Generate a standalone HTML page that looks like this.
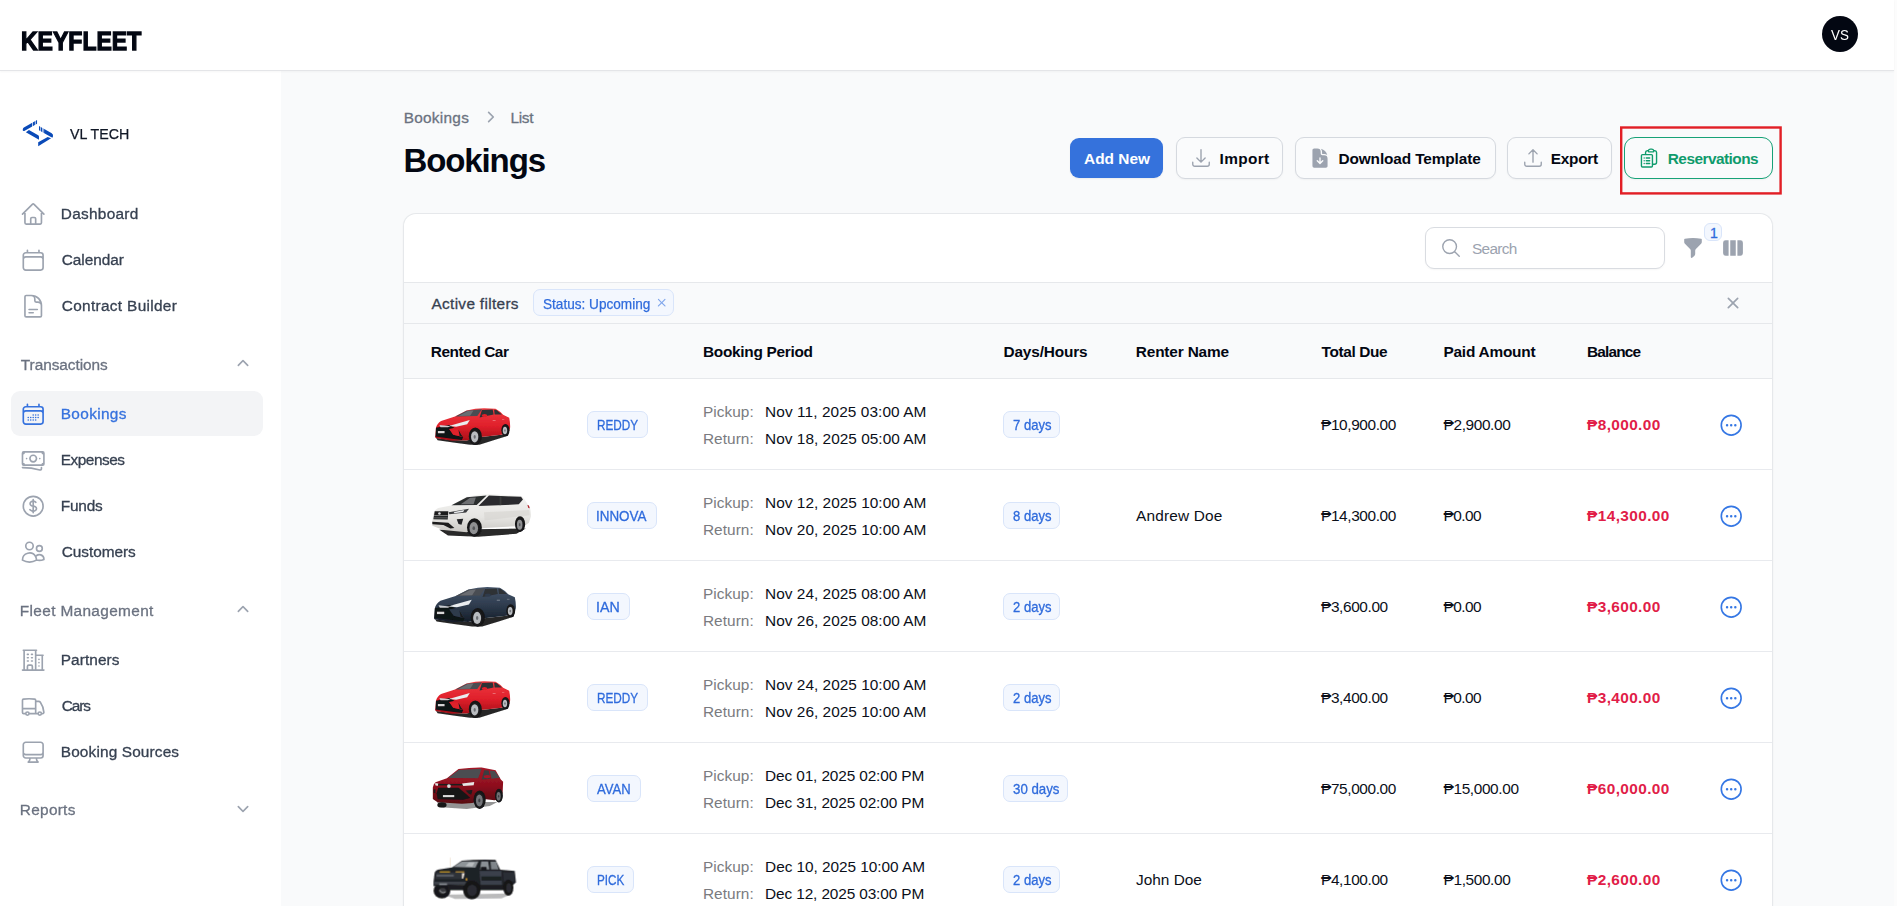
<!DOCTYPE html>
<html lang="en">
<head>
<meta charset="utf-8">
<title>Bookings - KEYFLEET</title>
<style>
*{box-sizing:border-box;margin:0;padding:0}
html,body{width:1897px;height:906px;overflow:hidden;background:#f9fafb;font-family:"Liberation Sans",sans-serif;color:#030712}
body{position:relative}
.abs{position:absolute}
.t{position:absolute;white-space:nowrap;line-height:1}
/* header */
#hdr{position:absolute;left:0;top:0;width:1894px;height:71px;background:#fff;border-bottom:1px solid #e4e5e8;box-shadow:0 1px 2px rgba(0,0,0,.04);z-index:3}
#gutter{position:absolute;left:1894px;top:0;width:3px;height:906px;background:#fcfcfc}
#brand{left:20px;top:27px;font-size:27px;font-weight:700;letter-spacing:-0.6px;color:#030712;-webkit-text-stroke:1.1px #030712}
#avatar{position:absolute;left:1822px;top:16px;width:36px;height:36px;border-radius:50%;background:#030712;color:#fff;font-size:14px;text-align:center;line-height:36px}
/* sidebar */
#side{position:absolute;left:0;top:71px;width:281px;height:835px;background:#fff}
.nav{position:absolute;left:60px;font-size:15px;font-weight:400;color:#374151;white-space:nowrap;line-height:1;-webkit-text-stroke:.35px #374151}
.grp{position:absolute;left:20px;font-size:15px;color:#6b7280;white-space:nowrap;line-height:1;-webkit-text-stroke:.3px #6b7280}
.ico{position:absolute;left:21px;width:24px;height:24px;fill:none;stroke:#9ca3af;stroke-width:1.5;stroke-linecap:round;stroke-linejoin:round}
.chev{position:absolute;left:235px;width:16px;height:16px;fill:none;stroke:#9ca3af;stroke-width:1.6;stroke-linecap:round;stroke-linejoin:round}
#gl{position:absolute;left:0;top:0;width:1894px;height:906px;will-change:transform;pointer-events:none;z-index:5}
#active{position:absolute;left:11px;top:391px;width:252px;height:45px;border-radius:8px;background:#f3f4f6}
</style>
</head>
<body>
<!-- HEADER -->
<div id="hdr">
  <div id="avatar"></div>
</div>
<div id="gutter"></div>

<!-- SIDEBAR -->
<div id="side"></div>
<div id="gl"><div class="t" style="left:21.30px;top:27.75px;font-size:26.4px;color:#030712;font-weight:700;-webkit-text-stroke:1.35px #030712;transform:scaleX(0.8723);transform-origin:0 0;">KEYFLEET</div>
<div class="t" style="left:1831.40px;top:26.96px;font-size:15.4px;color:#ffffff;transform:scaleX(0.8685);transform-origin:0 0;">VS</div>
<svg class="abs" style="left:10px;top:100px" width="100" height="70" viewBox="0 0 1294 906">
<g fill="#0a4ab8">
<path d="M185 352 L350 258 L350 308 L185 402 Q160 405 165 378 Q168 358 185 352Z"/>
<path d="M205 418 L245 388 L365 455 Q378 465 375 480 L375 514Z"/>
<path d="M375 338 L540 430 Q565 448 555 478 Q548 492 530 480 L375 392Z"/>
<path d="M365 548 L488 478 L532 496 L365 598Z"/>
</g>
<g fill="#fff">
<rect x="286" y="250" width="9" height="110"/><rect x="322" y="240" width="9" height="100"/>
<rect x="392" y="330" width="8" height="90"/><rect x="414" y="345" width="8" height="90"/><rect x="434" y="360" width="7" height="90"/>
</g></svg>
<div class="t" style="left:70.12px;top:125.56px;font-size:15.4px;color:#111827;-webkit-text-stroke:0.25px #111827;transform:scaleX(0.9244);transform-origin:0 0;">VL TECH</div>
<div class="abs" style="left:11px;top:391px;width:252px;height:45px;border-radius:9px;background:#f3f4f6"></div>
<svg class="abs" style="left:20.4px;top:201.2px" width="26.4" height="26.4" viewBox="0 0 24 24" fill="none" stroke="#9ca3af" stroke-width="1.5" stroke-linecap="round" stroke-linejoin="round"><path d="m2.25 12 8.954-8.955c.44-.439 1.152-.439 1.591 0L21.75 12M4.5 9.75v10.125c0 .621.504 1.125 1.125 1.125H9.75v-4.875c0-.621.504-1.125 1.125-1.125h2.25c.621 0 1.125.504 1.125 1.125V21h4.125c.621 0 1.125-.504 1.125-1.125V9.75M8.25 21h8.25"/></svg>
<div class="t" style="left:60.75px;top:206.26px;font-size:15.4px;color:#374151;letter-spacing:0.283px;-webkit-text-stroke:0.3px #374151;">Dashboard</div>
<svg class="abs" style="left:20.4px;top:247.2px" width="26.4" height="26.4" viewBox="0 0 24 24" fill="none" stroke="#9ca3af" stroke-width="1.5" stroke-linecap="round" stroke-linejoin="round"><path d="M6.75 3v2.25M17.25 3v2.25M3 18.75V7.5a2.25 2.25 0 0 1 2.25-2.25h13.5A2.25 2.25 0 0 1 21 7.5v11.25m-18 0A2.25 2.25 0 0 0 5.25 21h13.5A2.25 2.25 0 0 0 21 18.75m-18 0v-7.5A2.25 2.25 0 0 1 5.25 9h13.5A2.25 2.25 0 0 1 21 11.25v7.5"/></svg>
<div class="t" style="left:61.75px;top:252.26px;font-size:15.4px;color:#374151;letter-spacing:-0.047px;-webkit-text-stroke:0.3px #374151;">Calendar</div>
<svg class="abs" style="left:20.4px;top:293.2px" width="26.4" height="26.4" viewBox="0 0 24 24" fill="none" stroke="#9ca3af" stroke-width="1.5" stroke-linecap="round" stroke-linejoin="round"><path d="M19.5 14.25v-2.625a3.375 3.375 0 0 0-3.375-3.375h-1.5A1.125 1.125 0 0 1 13.5 7.125v-1.5a3.375 3.375 0 0 0-3.375-3.375H8.25m0 12.75h7.5m-7.5 3H12M10.5 2.25H5.625c-.621 0-1.125.504-1.125 1.125v17.25c0 .621.504 1.125 1.125 1.125h12.75c.621 0 1.125-.504 1.125-1.125V11.25a9 9 0 0 0-9-9Z"/></svg>
<div class="t" style="left:61.75px;top:298.26px;font-size:15.4px;color:#374151;letter-spacing:0.318px;-webkit-text-stroke:0.3px #374151;">Contract Builder</div>
<svg class="abs" style="left:20.4px;top:400.5px" width="26.4" height="26.4" viewBox="0 0 24 24" fill="none" stroke="#3672de" stroke-width="1.5" stroke-linecap="round" stroke-linejoin="round"><path d="M6.75 3v2.25M17.25 3v2.25M3 18.75V7.5a2.25 2.25 0 0 1 2.25-2.25h13.5A2.25 2.25 0 0 1 21 7.5v11.25m-18 0A2.25 2.25 0 0 0 5.25 21h13.5A2.25 2.25 0 0 0 21 18.75m-18 0v-7.5A2.25 2.25 0 0 1 5.25 9h13.5A2.25 2.25 0 0 1 21 11.25v7.5m-9-6h.008v.008H12v-.008ZM12 15h.008v.008H12V15Zm0 2.25h.008v.008H12v-.008ZM9.75 15h.008v.008H9.75V15Zm0 2.25h.008v.008H9.75v-.008ZM7.5 15h.008v.008H7.5V15Zm0 2.25h.008v.008H7.5v-.008Zm6.75-4.5h.008v.008h-.008v-.008Zm0 2.25h.008v.008h-.008V15Zm0 2.25h.008v.008h-.008v-.008Zm2.25-4.5h.008v.008H16.5v-.008Zm0 2.25h.008v.008H16.5V15Z"/></svg>
<div class="t" style="left:60.75px;top:405.56px;font-size:15.4px;color:#3672de;letter-spacing:0.340px;-webkit-text-stroke:0.3px #3672de;">Bookings</div>
<svg class="abs" style="left:20.4px;top:446.5px" width="26.4" height="26.4" viewBox="0 0 24 24" fill="none" stroke="#9ca3af" stroke-width="1.5" stroke-linecap="round" stroke-linejoin="round"><path d="M2.25 18.75a60.07 60.07 0 0 1 15.797 2.101c.727.198 1.453-.342 1.453-1.096V18.75M3.75 4.5v.75A.75.75 0 0 1 3 6h-.75m0 0v-.375c0-.621.504-1.125 1.125-1.125H20.25M2.25 6v9m18-10.5v.75c0 .414.336.75.75.75h.75m-1.5-1.5h.375c.621 0 1.125.504 1.125 1.125v9.75c0 .621-.504 1.125-1.125 1.125h-.375m1.5-1.5H21a.75.75 0 0 0-.75.75v.75m0 0H3.75m0 0h-.375a1.125 1.125 0 0 1-1.125-1.125V15m1.5 1.5v-.75A.75.75 0 0 0 3 15h-.75M15 10.5a3 3 0 1 1-6 0 3 3 0 0 1 6 0Zm3 0h.008v.008H18V10.5Zm-12 0h.008v.008H6V10.5Z"/></svg>
<div class="t" style="left:60.75px;top:451.56px;font-size:15.4px;color:#374151;letter-spacing:-0.471px;-webkit-text-stroke:0.3px #374151;">Expenses</div>
<svg class="abs" style="left:20.4px;top:492.5px" width="26.4" height="26.4" viewBox="0 0 24 24" fill="none" stroke="#9ca3af" stroke-width="1.5" stroke-linecap="round" stroke-linejoin="round"><path d="M12 6v12m-3-2.818.879.659c1.171.879 3.07.879 4.242 0 1.172-.879 1.172-2.303 0-3.182C13.536 12.219 12.768 12 12 12c-.725 0-1.45-.22-2.003-.659-1.106-.879-1.106-2.303 0-3.182s2.9-.879 4.006 0l.415.33M21 12a9 9 0 1 1-18 0 9 9 0 0 1 18 0Z"/></svg>
<div class="t" style="left:60.75px;top:497.56px;font-size:15.4px;color:#374151;letter-spacing:-0.195px;-webkit-text-stroke:0.3px #374151;">Funds</div>
<svg class="abs" style="left:20.4px;top:538.5px" width="26.4" height="26.4" viewBox="0 0 24 24" fill="none" stroke="#9ca3af" stroke-width="1.5" stroke-linecap="round" stroke-linejoin="round"><path d="M15 19.128a9.38 9.38 0 0 0 2.625.372 9.337 9.337 0 0 0 4.121-.952 4.125 4.125 0 0 0-7.533-2.493M15 19.128v-.003c0-1.113-.285-2.16-.786-3.07M15 19.128v.106A12.318 12.318 0 0 1 8.624 21c-2.331 0-4.512-.645-6.374-1.766l-.001-.109a6.375 6.375 0 0 1 11.964-3.07M12 6.375a3.375 3.375 0 1 1-6.75 0 3.375 3.375 0 0 1 6.75 0Zm8.25 2.25a2.625 2.625 0 1 1-5.25 0 2.625 2.625 0 0 1 5.25 0Z"/></svg>
<div class="t" style="left:61.75px;top:543.56px;font-size:15.4px;color:#374151;letter-spacing:-0.051px;-webkit-text-stroke:0.3px #374151;">Customers</div>
<svg class="abs" style="left:20.4px;top:646.5px" width="26.4" height="26.4" viewBox="0 0 24 24" fill="none" stroke="#9ca3af" stroke-width="1.5" stroke-linecap="round" stroke-linejoin="round"><path d="M2.25 21h19.5m-18-18v18m10.5-18v18m6-13.5V21M6.75 6.75h.75m-.75 3h.75m-.75 3h.75m3-6h.75m-.75 3h.75m-.75 3h.75M6.75 21v-3.375c0-.621.504-1.125 1.125-1.125h2.25c.621 0 1.125.504 1.125 1.125V21M3 3h12m-.75 4.5H21m-3.75 3.75h.008v.008h-.008v-.008Zm0 3h.008v.008h-.008v-.008Zm0 3h.008v.008h-.008v-.008Z"/></svg>
<div class="t" style="left:60.75px;top:651.56px;font-size:15.4px;color:#374151;letter-spacing:0.076px;-webkit-text-stroke:0.3px #374151;">Partners</div>
<svg class="abs" style="left:20.4px;top:692.5px" width="26.4" height="26.4" viewBox="0 0 24 24" fill="none" stroke="#9ca3af" stroke-width="1.5" stroke-linecap="round" stroke-linejoin="round"><path d="M8.25 18.75a1.5 1.5 0 0 1-3 0m3 0a1.5 1.5 0 0 0-3 0m3 0h6m-9 0H3.375a1.125 1.125 0 0 1-1.125-1.125V14.25m17.25 4.5a1.5 1.5 0 0 1-3 0m3 0a1.5 1.5 0 0 0-3 0m3 0h1.125c.621 0 1.129-.504 1.09-1.124a17.902 17.902 0 0 0-3.213-9.193 2.056 2.056 0 0 0-1.58-.86H14.25M16.5 18.75h-2.25m0-11.177v-.958c0-.568-.422-1.048-.987-1.106a48.554 48.554 0 0 0-10.026 0 1.106 1.106 0 0 0-.987 1.106v7.635m12-6.677v6.677m0 4.5v-4.5m0 0h-12"/></svg>
<div class="t" style="left:61.75px;top:697.56px;font-size:15.4px;color:#374151;letter-spacing:-1.133px;-webkit-text-stroke:0.3px #374151;">Cars</div>
<svg class="abs" style="left:20.4px;top:738.5px" width="26.4" height="26.4" viewBox="0 0 24 24" fill="none" stroke="#9ca3af" stroke-width="1.5" stroke-linecap="round" stroke-linejoin="round"><path d="M9 17.25v1.007a3 3 0 0 1-.879 2.122L7.5 21h9l-.621-.621A3 3 0 0 1 15 18.257V17.25m6-12V15a2.25 2.25 0 0 1-2.25 2.25H5.25A2.25 2.25 0 0 1 3 15V5.25m18 0A2.25 2.25 0 0 0 18.75 3H5.25A2.25 2.25 0 0 0 3 5.25m18 0V12a2.25 2.25 0 0 1-2.25 2.25H5.25A2.25 2.25 0 0 1 3 12V5.25"/></svg>
<div class="t" style="left:60.75px;top:743.56px;font-size:15.4px;color:#374151;letter-spacing:0.139px;-webkit-text-stroke:0.3px #374151;">Booking Sources</div>
<div class="t" style="left:20.85px;top:356.66px;font-size:15.4px;color:#6b7280;letter-spacing:-0.058px;-webkit-text-stroke:0.3px #6b7280;">Transactions</div>
<svg class="abs" style="left:232px;top:353.0px" width="22" height="22" viewBox="0 0 20 20" fill="#9ca3af"><path fill-rule="evenodd" clip-rule="evenodd" d="M9.47 6.47a.75.75 0 0 1 1.06 0l4.25 4.25a.75.75 0 1 1-1.06 1.06L10 8.06l-3.72 3.72a.75.75 0 0 1-1.06-1.06l4.25-4.25Z"/></svg>
<div class="t" style="left:19.85px;top:602.66px;font-size:15.4px;color:#6b7280;letter-spacing:0.343px;-webkit-text-stroke:0.3px #6b7280;">Fleet Management</div>
<svg class="abs" style="left:232px;top:599.0px" width="22" height="22" viewBox="0 0 20 20" fill="#9ca3af"><path fill-rule="evenodd" clip-rule="evenodd" d="M9.47 6.47a.75.75 0 0 1 1.06 0l4.25 4.25a.75.75 0 1 1-1.06 1.06L10 8.06l-3.72 3.72a.75.75 0 0 1-1.06-1.06l4.25-4.25Z"/></svg>
<div class="t" style="left:19.85px;top:801.66px;font-size:15.4px;color:#6b7280;letter-spacing:0.268px;-webkit-text-stroke:0.3px #6b7280;">Reports</div>
<svg class="abs" style="left:232px;top:796.8px" width="22" height="22" viewBox="0 0 20 20" fill="#9ca3af"><path fill-rule="evenodd" clip-rule="evenodd" d="M5.22 8.22a.75.75 0 0 1 1.06 0L10 11.94l3.72-3.72a.75.75 0 1 1 1.06 1.06l-4.25 4.25a.75.75 0 0 1-1.06 0L5.22 9.28a.75.75 0 0 1 0-1.06Z"/></svg></div>

<div class="t" style="left:403.65px;top:110.06px;font-size:15.4px;color:#6b7280;letter-spacing:0.269px;-webkit-text-stroke:0.3px #6b7280;">Bookings</div>
<svg class="abs" style="left:479.3px;top:106.0px" width="22" height="22" viewBox="0 0 20 20" fill="#9ca3af"><path fill-rule="evenodd" clip-rule="evenodd" d="M8.22 5.22a.75.75 0 0 1 1.06 0l4.25 4.25a.75.75 0 0 1 0 1.06l-4.25 4.25a.75.75 0 0 1-1.06-1.06L11.94 10 8.22 6.28a.75.75 0 0 1 0-1.06Z"/></svg>
<div class="t" style="left:510.45px;top:110.06px;font-size:15.4px;color:#6b7280;letter-spacing:-0.325px;-webkit-text-stroke:0.3px #6b7280;">List</div>
<div class="t" style="left:403.50px;top:144.07px;font-size:33px;color:#030712;font-weight:700;letter-spacing:-1.112px;">Bookings</div>
<div class="abs" style="left:1070px;top:138px;width:93px;height:40px;border-radius:9px;background:#3572dc;box-shadow:0 1px 2px rgba(0,0,0,.06)"></div>
<div class="t" style="left:1084.00px;top:150.66px;font-size:15.4px;color:#fff;font-weight:700;letter-spacing:0.039px;">Add New</div>
<div class="abs" style="left:1176px;top:137px;width:107px;height:42px;border-radius:9px;border:1px solid #d5d9df;background:#fafbfc;box-shadow:0 1px 2px rgba(0,0,0,.04)"></div>
<svg class="abs" style="left:1190.2px;top:147.2px" width="22" height="22" viewBox="0 0 24 24" fill="none" stroke="#9ca3af" stroke-width="1.5" stroke-linecap="round" stroke-linejoin="round"><path d="M3 16.5v2.25A2.25 2.25 0 0 0 5.25 21h13.5A2.25 2.25 0 0 0 21 18.75V16.5M16.5 12 12 16.5m0 0L7.5 12m4.5 4.5V3"/></svg>
<div class="t" style="left:1219.50px;top:150.76px;font-size:15.4px;color:#030712;font-weight:700;letter-spacing:0.349px;">Import</div>
<div class="abs" style="left:1295px;top:137px;width:201px;height:42px;border-radius:9px;border:1px solid #d5d9df;background:#fafbfc;box-shadow:0 1px 2px rgba(0,0,0,.04)"></div>
<svg class="abs" style="left:1309.2px;top:147.3px" width="22" height="22" viewBox="0 0 24 24" fill="#9ca3af"><path fill-rule="evenodd" clip-rule="evenodd" d="M5.625 1.5H9a3.75 3.75 0 0 1 3.75 3.75v1.875c0 1.036.84 1.875 1.875 1.875H16.5a3.75 3.75 0 0 1 3.75 3.75v7.875c0 1.035-.84 1.875-1.875 1.875H5.625a1.875 1.875 0 0 1-1.875-1.875V3.375c0-1.036.84-1.875 1.875-1.875Zm5.845 17.03a.75.75 0 0 0 1.06 0l3-3a.75.75 0 1 0-1.06-1.06l-1.72 1.72V12a.75.75 0 0 0-1.5 0v4.19l-1.72-1.72a.75.75 0 0 0-1.06 1.06l3 3Z"/><path d="M14.25 5.25a5.23 5.23 0 0 0-1.279-3.434 9.768 9.768 0 0 1 6.963 6.963A5.23 5.23 0 0 0 16.5 7.5h-1.875a.375.375 0 0 1-.375-.375V5.25Z"/></svg>
<div class="t" style="left:1338.50px;top:150.76px;font-size:15.4px;color:#030712;font-weight:700;letter-spacing:-0.123px;">Download Template</div>
<div class="abs" style="left:1507px;top:137px;width:105px;height:42px;border-radius:9px;border:1px solid #d5d9df;background:#fafbfc;box-shadow:0 1px 2px rgba(0,0,0,.04)"></div>
<svg class="abs" style="left:1522.2px;top:147.2px" width="22" height="22" viewBox="0 0 24 24" fill="none" stroke="#9ca3af" stroke-width="1.5" stroke-linecap="round" stroke-linejoin="round"><path d="M3 16.5v2.25A2.25 2.25 0 0 0 5.25 21h13.5A2.25 2.25 0 0 0 21 18.75V16.5m-13.5-9L12 3m0 0 4.5 4.5M12 3v13.5"/></svg>
<div class="t" style="left:1550.80px;top:150.76px;font-size:15.4px;color:#030712;font-weight:700;letter-spacing:-0.283px;">Export</div>
<div class="abs" style="left:1624px;top:137px;width:149px;height:42px;border-radius:11px;border:1px solid #17a277;background:#f9fafb;box-shadow:0 1px 2px rgba(0,0,0,.04)"></div>
<svg class="abs" style="left:1638.3px;top:147.2px" width="22" height="22" viewBox="0 0 24 24" fill="none" stroke="#0f9b6c" stroke-width="1.5" stroke-linecap="round" stroke-linejoin="round"><path d="M9 12h3.75M9 15h3.75M9 18h3.75m3 .75H18a2.25 2.25 0 0 0 2.25-2.25V6.108c0-1.135-.845-2.098-1.976-2.192a48.424 48.424 0 0 0-1.123-.08m-5.801 0c-.065.21-.1.433-.1.664 0 .414.336.75.75.75h4.5a.75.75 0 0 0 .75-.75 2.25 2.25 0 0 0-.1-.664m-5.8 0A2.251 2.251 0 0 1 13.5 2.25H15c1.012 0 1.867.668 2.15 1.586m-5.8 0c-.376.023-.75.05-1.124.08C9.095 4.01 8.25 4.973 8.25 6.108V8.25m0 0H4.875c-.621 0-1.125.504-1.125 1.125v11.25c0 .621.504 1.125 1.125 1.125h9.75c.621 0 1.125-.504 1.125-1.125V9.375c0-.621-.504-1.125-1.125-1.125H8.25ZM6.75 12h.008v.008H6.75V12Zm0 3h.008v.008H6.75V15Zm0 3h.008v.008H6.75V18Z"/></svg>
<div class="t" style="left:1667.80px;top:150.76px;font-size:15.4px;color:#0f9b6c;font-weight:700;letter-spacing:-0.537px;">Reservations</div>
<svg class="abs" style="left:1615px;top:121px" width="172" height="80"><rect x="6.2" y="6.5" width="159.4" height="65.9" fill="none" stroke="#e21e25" stroke-width="2.4"/></svg>
<div class="abs" style="left:403px;top:213px;width:1370px;height:700px;border-radius:13px 13px 0 0;background:#fff;border:1px solid #e6e8eb;border-bottom:none;box-shadow:0 1px 2px rgba(0,0,0,.05)"></div>
<div class="abs" style="left:1425px;top:227px;width:240px;height:42px;border-radius:9px;border:1px solid #d9dce1;background:#fff;box-shadow:0 1px 2px rgba(0,0,0,.04)"></div>
<svg class="abs" style="left:1440.3px;top:237px" width="22" height="22" viewBox="0 0 24 24" fill="none" stroke="#9ca3af" stroke-width="1.5" stroke-linecap="round" stroke-linejoin="round"><path d="m21 21-5.197-5.197m0 0A7.5 7.5 0 1 0 5.196 5.196a7.5 7.5 0 0 0 10.607 10.607Z"/></svg>
<div class="t" style="left:1472.00px;top:240.76px;font-size:15.4px;color:#9ca3af;letter-spacing:-0.701px;">Search</div>
<svg class="abs" style="left:1682.2px;top:237.3px" width="22" height="22" viewBox="0 0 20 20" fill="#9ca3af"><path fill-rule="evenodd" clip-rule="evenodd" d="M2.628 1.601C5.028 1.206 7.49 1 10 1s4.973.206 7.372.601a.75.75 0 0 1 .628.74v2.288a2.25 2.25 0 0 1-.659 1.59l-4.682 4.683a2.25 2.25 0 0 0-.659 1.59v3.037c0 .684-.31 1.33-.844 1.757l-1.937 1.55A.75.75 0 0 1 8 18.25v-5.757a2.25 2.25 0 0 0-.659-1.591L2.659 6.22A2.25 2.25 0 0 1 2 4.629V2.34a.75.75 0 0 1 .628-.74Z"/></svg>
<div class="abs" style="left:1704px;top:223px;width:18px;height:18px;border-radius:6px;background:#f3f7fe;border:1px solid #d9e5fa"></div>
<div class="t" style="left:1710.05px;top:226.06px;font-size:14.1px;color:#2f6bdc;-webkit-text-stroke:0.3px #2f6bdc;">1</div>
<svg class="abs" style="left:1722px;top:237.3px" width="22" height="22" viewBox="0 0 20 20" fill="#9ca3af"><path fill-rule="evenodd" clip-rule="evenodd" d="M14 17h2.75A2.25 2.25 0 0 0 19 14.75v-9.5A2.25 2.25 0 0 0 16.75 3H14v14ZM12.5 3h-5v14h5V3ZM3.25 3H6v14H3.25A2.25 2.25 0 0 1 1 14.75v-9.5A2.25 2.25 0 0 1 3.25 3Z"/></svg>
<div class="abs" style="left:404px;top:282px;width:1368px;height:1px;background:#e6e8eb"></div>
<div class="abs" style="left:404px;top:283px;width:1368px;height:40px;background:#f9fafb"></div>
<div class="abs" style="left:404px;top:323px;width:1368px;height:1px;background:#e6e8eb"></div>
<div class="t" style="left:431.45px;top:295.76px;font-size:15.4px;color:#374151;letter-spacing:0.318px;-webkit-text-stroke:0.3px #374151;">Active filters</div>
<div class="abs" style="left:533px;top:289px;width:141px;height:27px;border-radius:7px;background:#f3f7fe;border:1px solid #d9e5fa"></div>
<div class="t" style="left:542.62px;top:297.26px;font-size:14.1px;color:#2f6bdc;-webkit-text-stroke:0.25px #2f6bdc;transform:scaleX(0.9651);transform-origin:0 0;">Status: Upcoming</div>
<svg class="abs" style="left:654.2px;top:295.4px" width="15.4" height="15.4" viewBox="0 0 20 20" fill="#7fa6ec"><path fill-rule="evenodd" clip-rule="evenodd" d="M6.28 5.22a.75.75 0 0 0-1.06 1.06L8.94 10l-3.72 3.72a.75.75 0 1 0 1.06 1.06L10 11.06l3.72 3.72a.75.75 0 1 0 1.06-1.06L11.06 10l3.72-3.72a.75.75 0 0 0-1.06-1.06L10 8.94 6.28 5.22Z"/></svg>
<svg class="abs" style="left:1722px;top:292.3px" width="22" height="22" viewBox="0 0 20 20" fill="#9ca3af"><path fill-rule="evenodd" clip-rule="evenodd" d="M6.28 5.22a.75.75 0 0 0-1.06 1.06L8.94 10l-3.72 3.72a.75.75 0 1 0 1.06 1.06L10 11.06l3.72 3.72a.75.75 0 1 0 1.06-1.06L11.06 10l3.72-3.72a.75.75 0 0 0-1.06-1.06L10 8.94 6.28 5.22Z"/></svg>
<div class="abs" style="left:404px;top:324px;width:1368px;height:54px;background:#f9fafb"></div>
<div class="abs" style="left:404px;top:378px;width:1368px;height:1px;background:#e6e8eb"></div>
<div class="t" style="left:430.80px;top:343.66px;font-size:15.4px;color:#030712;font-weight:700;letter-spacing:-0.435px;">Rented Car</div>
<div class="t" style="left:703.00px;top:343.66px;font-size:15.4px;color:#030712;font-weight:700;letter-spacing:-0.294px;">Booking Period</div>
<div class="t" style="left:1003.50px;top:343.66px;font-size:15.4px;color:#030712;font-weight:700;letter-spacing:-0.164px;">Days/Hours</div>
<div class="t" style="left:1135.80px;top:343.66px;font-size:15.4px;color:#030712;font-weight:700;letter-spacing:-0.168px;">Renter Name</div>
<div class="t" style="left:1321.50px;top:343.66px;font-size:15.4px;color:#030712;font-weight:700;letter-spacing:-0.364px;">Total Due</div>
<div class="t" style="left:1443.50px;top:343.66px;font-size:15.4px;color:#030712;font-weight:700;letter-spacing:-0.228px;">Paid Amount</div>
<div class="t" style="left:1587.00px;top:343.66px;font-size:15.4px;color:#030712;font-weight:700;letter-spacing:-0.828px;">Balance</div>
<svg class="abs" style="left:426px;top:400px" width="110" height="50" viewBox="0 0 1897 862"><defs><filter id="b1" x="-5%" y="-5%" width="110%" height="110%"><feGaussianBlur stdDeviation="7"/></filter></defs><g filter="url(#b1)"><g ><defs><linearGradient id="g1" x1="0" y1="0" x2="0" y2="1"><stop offset="0" stop-color="#ee3a40"/><stop offset="0.55" stop-color="#e0202b"/><stop offset="1" stop-color="#a80f18"/></linearGradient></defs><path d="M175 655 L450 690 L700 700 L950 640 L1300 600 L1425 570 L1415 615 L1180 690 L920 772 L760 772 L500 735 L200 692Z" fill="#0d0d0e" opacity=".9"/><path d="M160 640 L172 480 Q190 400 260 360 L500 285 L700 180 Q850 140 1000 140 L1200 150 Q1290 200 1330 255 L1435 305 Q1455 400 1450 480 L1425 570 L1300 600 L950 640 L700 700 L450 690 Z" fill="url(#g1)"/><path d="M505 285 L700 185 L965 160 L885 275Z" fill="#4a4d52" /><path d="M560 275 L720 190 L820 180 L760 272Z" fill="#6a6d72" /><path d="M965 172 L1150 165 L1165 250 L925 300Z" fill="#2e3034" /><path d="M1175 168 L1215 172 L1310 250 L1185 250Z" fill="#2e3034" /><ellipse cx="1010" cy="268" rx="48" ry="26" fill="#e0202b"/><path d="M172 478 L400 432 L490 478 L400 500 L470 600 L640 640 L620 690 L450 690 L165 640Z" fill="#111214" /><path d="M400 500 L560 505 L640 640 L470 600Z" fill="#e0202b" /><path d="M560 515 L610 600 L640 640 L580 620Z" fill="#1a1a1c" /><path d="M160 628 L450 668 L625 690 L450 702 L165 655Z" fill="#a80f18" /><path d="M470 425 L755 345 L710 420 L520 462 L400 450Z" fill="#e9ecef" /><path d="M230 430 L400 450 L470 425 L380 470 L250 470Z" fill="#c9ccd0" /><rect x="205" y="535" width="115" height="38" fill="#d8d8d8"/><rect x="1150" y="345" width="50" height="10" fill="#ffffff" opacity=".55"/><rect x="1310" y="330" width="40" height="9" fill="#ffffff" opacity=".45"/><ellipse cx="850" cy="625" rx="112" ry="150" fill="#141416"/><ellipse cx="1370" cy="520" rx="70" ry="105" fill="#141416"/><ellipse cx="845" cy="635" rx="88" ry="132" fill="#1a1a1c"/><ellipse cx="839.72" cy="635" rx="63.36" ry="97.67999999999999" fill="#b9bcc0"/><ellipse cx="839.72" cy="635" rx="19.36" ry="31.68" fill="#6d7075"/><ellipse cx="1365" cy="525" rx="52" ry="88" fill="#1a1a1c"/><ellipse cx="1361.88" cy="525" rx="37.44" ry="65.12" fill="#b9bcc0"/><ellipse cx="1361.88" cy="525" rx="11.44" ry="21.119999999999997" fill="#6d7075"/></g></g></svg>
<div class="abs" style="left:587px;top:411px;width:61px;height:27px;border-radius:7px;background:#f3f7fe;border:1px solid #d9e5fa"></div>
<div class="t" style="left:596.52px;top:417.76px;font-size:14.1px;color:#2f6bdc;-webkit-text-stroke:0.3px #2f6bdc;transform:scaleX(0.8338);transform-origin:0 0;">REDDY</div>
<div class="t" style="left:702.90px;top:404.16px;font-size:15.4px;color:#7a7b80;letter-spacing:0.068px;">Pickup:</div>
<div class="t" style="left:702.90px;top:431.16px;font-size:15.4px;color:#7a7b80;letter-spacing:0.068px;">Return:</div>
<div class="t" style="left:765.10px;top:404.16px;font-size:15.4px;color:#0b0f19;letter-spacing:0.078px;">Nov 11, 2025 03:00 AM</div>
<div class="t" style="left:765.10px;top:431.16px;font-size:15.4px;color:#0b0f19;letter-spacing:0.021px;">Nov 18, 2025 05:00 AM</div>
<div class="abs" style="left:1003px;top:411px;width:57px;height:27px;border-radius:7px;background:#f3f7fe;border:1px solid #d9e5fa"></div>
<div class="t" style="left:1012.75px;top:417.56px;font-size:14.1px;color:#2f6bdc;-webkit-text-stroke:0.3px #2f6bdc;transform:scaleX(0.9258);transform-origin:0 0;">7 days</div>
<div class="t" style="left:1321.00px;top:417.06px;font-size:15.4px;color:#0b0f19;letter-spacing:-0.375px;">₱10,900.00</div>
<div class="t" style="left:1443.60px;top:417.06px;font-size:15.4px;color:#0b0f19;letter-spacing:-0.377px;">₱2,900.00</div>
<div class="t" style="left:1587.10px;top:417.06px;font-size:15.4px;color:#e11d48;font-weight:700;letter-spacing:0.373px;">₱8,000.00</div>
<svg class="abs" style="left:1718.1px;top:411.5px" width="26.4" height="26.4" viewBox="0 0 24 24" fill="none" stroke="#3577e4" stroke-width="1.5" stroke-linecap="round" stroke-linejoin="round"><path d="M8.625 12a.375.375 0 1 1-.75 0 .375.375 0 0 1 .75 0Zm0 0H8.25m4.125 0a.375.375 0 1 1-.75 0 .375.375 0 0 1 .75 0Zm0 0H12m4.125 0a.375.375 0 1 1-.75 0 .375.375 0 0 1 .75 0Zm0 0h-.375M21 12a9 9 0 1 1-18 0 9 9 0 0 1 18 0Z"/></svg>
<div class="abs" style="left:404px;top:469px;width:1368px;height:1px;background:#e8eaee"></div>
<svg class="abs" style="left:426px;top:488px" width="110" height="50" viewBox="0 0 1897 862"><defs><filter id="b2" x="-5%" y="-5%" width="110%" height="110%"><feGaussianBlur stdDeviation="7"/></filter></defs><g filter="url(#b2)"><g ><defs><linearGradient id="gw" x1="0" y1="0" x2="0" y2="1"><stop offset="0" stop-color="#f4f4f2"/><stop offset="0.6" stop-color="#e6e5e2"/><stop offset="1" stop-color="#c9c7c3"/></linearGradient></defs><path d="M230 720 L1720 700 L1560 790 L900 840 L380 820 Z" fill="#141414" opacity=".92"/><path d="M108 590 L128 440 Q150 370 210 345 L430 300 L700 150 Q900 110 1100 105 L1650 138 L1700 200 L1790 330 Q1815 420 1808 490 L1775 600 L1700 650 L1000 690 L700 765 L300 725 L110 650 Z" fill="url(#gw)"/><path d="M440 298 L705 158 L1045 130 L875 292Z" fill="#2b2d2f" /><path d="M600 280 L760 170 L860 165 L820 280Z" fill="#6e7072" /><path d="M1085 130 L1640 152 L1672 200 L1600 282 L905 312Z" fill="#2a2b2d" /><path d="M1270 140 L1300 140 L1300 295 L1270 297Z" fill="#3a3a3c" /><path d="M150 400 L385 402 L375 545 L128 540Z" fill="#1b1c1e" /><rect x="140" y="470" width="235" height="14" fill="#9a9a9a"/><rect x="135" y="510" width="240" height="12" fill="#8a8a8a"/><circle cx="232" cy="440" r="22" fill="#d8d8d8"/><path d="M392 418 L742 358 L692 422 L402 452Z" fill="#3a3c3f" /><path d="M480 412 L660 380 L640 415 L490 435Z" fill="#e8eaec" /><path d="M108 580 L385 600 L490 690 L420 700 L300 640 L110 625Z" fill="#1a1a1c" /><path d="M530 540 L642 530 L612 632 L560 622Z" fill="#232426" /><path d="M1748 292 L1775 300 L1790 350 L1765 345Z" fill="#b3262e" /><path d="M1000 420 L1780 380 L1790 470 L1010 560Z" fill="#d4d2ce" opacity=".55"/><ellipse cx="835" cy="680" rx="128" ry="160" fill="#161617"/><ellipse cx="1622" cy="622" rx="88" ry="135" fill="#161617"/><ellipse cx="830" cy="692" rx="102" ry="142" fill="#1a1a1c"/><ellipse cx="823.88" cy="692" rx="73.44" ry="105.08" fill="#8f9092"/><ellipse cx="823.88" cy="692" rx="22.44" ry="34.08" fill="#55575a"/><ellipse cx="1620" cy="632" rx="66" ry="116" fill="#1a1a1c"/><ellipse cx="1616.04" cy="632" rx="47.519999999999996" ry="85.84" fill="#8f9092"/><ellipse cx="1616.04" cy="632" rx="14.52" ry="27.84" fill="#55575a"/></g></g></svg>
<div class="abs" style="left:587px;top:502px;width:70px;height:27px;border-radius:7px;background:#f3f7fe;border:1px solid #d9e5fa"></div>
<div class="t" style="left:596.40px;top:508.76px;font-size:14.1px;color:#2f6bdc;-webkit-text-stroke:0.3px #2f6bdc;transform:scaleX(0.9508);transform-origin:0 0;">INNOVA</div>
<div class="t" style="left:702.90px;top:495.16px;font-size:15.4px;color:#7a7b80;letter-spacing:0.068px;">Pickup:</div>
<div class="t" style="left:702.90px;top:522.16px;font-size:15.4px;color:#7a7b80;letter-spacing:0.068px;">Return:</div>
<div class="t" style="left:765.10px;top:495.16px;font-size:15.4px;color:#0b0f19;letter-spacing:0.021px;">Nov 12, 2025 10:00 AM</div>
<div class="t" style="left:765.10px;top:522.16px;font-size:15.4px;color:#0b0f19;letter-spacing:0.021px;">Nov 20, 2025 10:00 AM</div>
<div class="abs" style="left:1003px;top:502px;width:57px;height:27px;border-radius:7px;background:#f3f7fe;border:1px solid #d9e5fa"></div>
<div class="t" style="left:1012.75px;top:508.56px;font-size:14.1px;color:#2f6bdc;-webkit-text-stroke:0.3px #2f6bdc;transform:scaleX(0.9258);transform-origin:0 0;">8 days</div>
<div class="t" style="left:1136.00px;top:508.06px;font-size:15.4px;color:#0b0f19;letter-spacing:0.174px;">Andrew Doe</div>
<div class="t" style="left:1321.00px;top:508.06px;font-size:15.4px;color:#0b0f19;letter-spacing:-0.375px;">₱14,300.00</div>
<div class="t" style="left:1443.60px;top:508.06px;font-size:15.4px;color:#0b0f19;letter-spacing:-0.540px;">₱0.00</div>
<div class="t" style="left:1587.10px;top:508.06px;font-size:15.4px;color:#e11d48;font-weight:700;letter-spacing:0.392px;">₱14,300.00</div>
<svg class="abs" style="left:1718.1px;top:502.5px" width="26.4" height="26.4" viewBox="0 0 24 24" fill="none" stroke="#3577e4" stroke-width="1.5" stroke-linecap="round" stroke-linejoin="round"><path d="M8.625 12a.375.375 0 1 1-.75 0 .375.375 0 0 1 .75 0Zm0 0H8.25m4.125 0a.375.375 0 1 1-.75 0 .375.375 0 0 1 .75 0Zm0 0H12m4.125 0a.375.375 0 1 1-.75 0 .375.375 0 0 1 .75 0Zm0 0h-.375M21 12a9 9 0 1 1-18 0 9 9 0 0 1 18 0Z"/></svg>
<div class="abs" style="left:404px;top:560px;width:1368px;height:1px;background:#e8eaee"></div>
<svg class="abs" style="left:426px;top:580px" width="110" height="50" viewBox="0 0 1897 862"><defs><filter id="b3" x="-5%" y="-5%" width="110%" height="110%"><feGaussianBlur stdDeviation="7"/></filter></defs><g filter="url(#b3)"><g transform="translate(-35,-30) scale(1.092,1.078)"><defs><linearGradient id="g3" x1="0" y1="0" x2="0" y2="1"><stop offset="0" stop-color="#46566b"/><stop offset="0.55" stop-color="#2d3a4c"/><stop offset="1" stop-color="#151d29"/></linearGradient></defs><path d="M175 655 L450 690 L700 700 L950 640 L1300 600 L1425 570 L1415 615 L1180 690 L920 772 L760 772 L500 735 L200 692Z" fill="#0d0d0e" opacity=".9"/><path d="M160 640 L172 480 Q190 400 260 360 L500 285 L700 180 Q850 140 1000 140 L1200 150 Q1290 200 1330 255 L1435 305 Q1455 400 1450 480 L1425 570 L1300 600 L950 640 L700 700 L450 690 Z" fill="url(#g3)"/><path d="M505 285 L700 185 L965 160 L885 275Z" fill="#4a4d52" /><path d="M560 275 L720 190 L820 180 L760 272Z" fill="#6a6d72" /><path d="M965 172 L1150 165 L1165 250 L925 300Z" fill="#2e3034" /><path d="M1175 168 L1215 172 L1310 250 L1185 250Z" fill="#2e3034" /><ellipse cx="1010" cy="268" rx="48" ry="26" fill="#2d3a4c"/><path d="M172 478 L400 432 L490 478 L400 500 L470 600 L640 640 L620 690 L450 690 L165 640Z" fill="#111214" /><path d="M400 500 L560 505 L640 640 L470 600Z" fill="#2d3a4c" /><path d="M560 515 L610 600 L640 640 L580 620Z" fill="#1a1a1c" /><path d="M160 628 L450 668 L625 690 L450 702 L165 655Z" fill="#151d29" /><path d="M470 425 L755 345 L710 420 L520 462 L400 450Z" fill="#e9ecef" /><path d="M230 430 L400 450 L470 425 L380 470 L250 470Z" fill="#c9ccd0" /><rect x="205" y="535" width="115" height="38" fill="#d8d8d8"/><rect x="1150" y="345" width="50" height="10" fill="#ffffff" opacity=".55"/><rect x="1310" y="330" width="40" height="9" fill="#ffffff" opacity=".45"/><ellipse cx="850" cy="625" rx="112" ry="150" fill="#141416"/><ellipse cx="1370" cy="520" rx="70" ry="105" fill="#141416"/><ellipse cx="845" cy="635" rx="88" ry="132" fill="#1a1a1c"/><ellipse cx="839.72" cy="635" rx="63.36" ry="97.67999999999999" fill="#b9bcc0"/><ellipse cx="839.72" cy="635" rx="19.36" ry="31.68" fill="#6d7075"/><ellipse cx="1365" cy="525" rx="52" ry="88" fill="#1a1a1c"/><ellipse cx="1361.88" cy="525" rx="37.44" ry="65.12" fill="#b9bcc0"/><ellipse cx="1361.88" cy="525" rx="11.44" ry="21.119999999999997" fill="#6d7075"/></g></g></svg>
<div class="abs" style="left:587px;top:593px;width:43px;height:27px;border-radius:7px;background:#f3f7fe;border:1px solid #d9e5fa"></div>
<div class="t" style="left:596.34px;top:599.76px;font-size:14.1px;color:#2f6bdc;-webkit-text-stroke:0.3px #2f6bdc;transform:scaleX(1.0082);transform-origin:0 0;">IAN</div>
<div class="t" style="left:702.90px;top:586.16px;font-size:15.4px;color:#7a7b80;letter-spacing:0.068px;">Pickup:</div>
<div class="t" style="left:702.90px;top:613.16px;font-size:15.4px;color:#7a7b80;letter-spacing:0.068px;">Return:</div>
<div class="t" style="left:765.10px;top:586.16px;font-size:15.4px;color:#0b0f19;letter-spacing:0.021px;">Nov 24, 2025 08:00 AM</div>
<div class="t" style="left:765.10px;top:613.16px;font-size:15.4px;color:#0b0f19;letter-spacing:0.021px;">Nov 26, 2025 08:00 AM</div>
<div class="abs" style="left:1003px;top:593px;width:57px;height:27px;border-radius:7px;background:#f3f7fe;border:1px solid #d9e5fa"></div>
<div class="t" style="left:1012.75px;top:599.56px;font-size:14.1px;color:#2f6bdc;-webkit-text-stroke:0.3px #2f6bdc;transform:scaleX(0.9258);transform-origin:0 0;">2 days</div>
<div class="t" style="left:1321.00px;top:599.06px;font-size:15.4px;color:#0b0f19;letter-spacing:-0.377px;">₱3,600.00</div>
<div class="t" style="left:1443.60px;top:599.06px;font-size:15.4px;color:#0b0f19;letter-spacing:-0.540px;">₱0.00</div>
<div class="t" style="left:1587.10px;top:599.06px;font-size:15.4px;color:#e11d48;font-weight:700;letter-spacing:0.373px;">₱3,600.00</div>
<svg class="abs" style="left:1718.1px;top:593.5px" width="26.4" height="26.4" viewBox="0 0 24 24" fill="none" stroke="#3577e4" stroke-width="1.5" stroke-linecap="round" stroke-linejoin="round"><path d="M8.625 12a.375.375 0 1 1-.75 0 .375.375 0 0 1 .75 0Zm0 0H8.25m4.125 0a.375.375 0 1 1-.75 0 .375.375 0 0 1 .75 0Zm0 0H12m4.125 0a.375.375 0 1 1-.75 0 .375.375 0 0 1 .75 0Zm0 0h-.375M21 12a9 9 0 1 1-18 0 9 9 0 0 1 18 0Z"/></svg>
<div class="abs" style="left:404px;top:651px;width:1368px;height:1px;background:#e8eaee"></div>
<svg class="abs" style="left:426px;top:673px" width="110" height="50" viewBox="0 0 1897 862"><defs><filter id="b4" x="-5%" y="-5%" width="110%" height="110%"><feGaussianBlur stdDeviation="7"/></filter></defs><g filter="url(#b4)"><g ><defs><linearGradient id="g4" x1="0" y1="0" x2="0" y2="1"><stop offset="0" stop-color="#ee3a40"/><stop offset="0.55" stop-color="#e0202b"/><stop offset="1" stop-color="#a80f18"/></linearGradient></defs><path d="M175 655 L450 690 L700 700 L950 640 L1300 600 L1425 570 L1415 615 L1180 690 L920 772 L760 772 L500 735 L200 692Z" fill="#0d0d0e" opacity=".9"/><path d="M160 640 L172 480 Q190 400 260 360 L500 285 L700 180 Q850 140 1000 140 L1200 150 Q1290 200 1330 255 L1435 305 Q1455 400 1450 480 L1425 570 L1300 600 L950 640 L700 700 L450 690 Z" fill="url(#g4)"/><path d="M505 285 L700 185 L965 160 L885 275Z" fill="#4a4d52" /><path d="M560 275 L720 190 L820 180 L760 272Z" fill="#6a6d72" /><path d="M965 172 L1150 165 L1165 250 L925 300Z" fill="#2e3034" /><path d="M1175 168 L1215 172 L1310 250 L1185 250Z" fill="#2e3034" /><ellipse cx="1010" cy="268" rx="48" ry="26" fill="#e0202b"/><path d="M172 478 L400 432 L490 478 L400 500 L470 600 L640 640 L620 690 L450 690 L165 640Z" fill="#111214" /><path d="M400 500 L560 505 L640 640 L470 600Z" fill="#e0202b" /><path d="M560 515 L610 600 L640 640 L580 620Z" fill="#1a1a1c" /><path d="M160 628 L450 668 L625 690 L450 702 L165 655Z" fill="#a80f18" /><path d="M470 425 L755 345 L710 420 L520 462 L400 450Z" fill="#e9ecef" /><path d="M230 430 L400 450 L470 425 L380 470 L250 470Z" fill="#c9ccd0" /><rect x="205" y="535" width="115" height="38" fill="#d8d8d8"/><rect x="1150" y="345" width="50" height="10" fill="#ffffff" opacity=".55"/><rect x="1310" y="330" width="40" height="9" fill="#ffffff" opacity=".45"/><ellipse cx="850" cy="625" rx="112" ry="150" fill="#141416"/><ellipse cx="1370" cy="520" rx="70" ry="105" fill="#141416"/><ellipse cx="845" cy="635" rx="88" ry="132" fill="#1a1a1c"/><ellipse cx="839.72" cy="635" rx="63.36" ry="97.67999999999999" fill="#b9bcc0"/><ellipse cx="839.72" cy="635" rx="19.36" ry="31.68" fill="#6d7075"/><ellipse cx="1365" cy="525" rx="52" ry="88" fill="#1a1a1c"/><ellipse cx="1361.88" cy="525" rx="37.44" ry="65.12" fill="#b9bcc0"/><ellipse cx="1361.88" cy="525" rx="11.44" ry="21.119999999999997" fill="#6d7075"/></g></g></svg>
<div class="abs" style="left:587px;top:684px;width:61px;height:27px;border-radius:7px;background:#f3f7fe;border:1px solid #d9e5fa"></div>
<div class="t" style="left:596.52px;top:690.76px;font-size:14.1px;color:#2f6bdc;-webkit-text-stroke:0.3px #2f6bdc;transform:scaleX(0.8338);transform-origin:0 0;">REDDY</div>
<div class="t" style="left:702.90px;top:677.16px;font-size:15.4px;color:#7a7b80;letter-spacing:0.068px;">Pickup:</div>
<div class="t" style="left:702.90px;top:704.16px;font-size:15.4px;color:#7a7b80;letter-spacing:0.068px;">Return:</div>
<div class="t" style="left:765.10px;top:677.16px;font-size:15.4px;color:#0b0f19;letter-spacing:0.021px;">Nov 24, 2025 10:00 AM</div>
<div class="t" style="left:765.10px;top:704.16px;font-size:15.4px;color:#0b0f19;letter-spacing:0.021px;">Nov 26, 2025 10:00 AM</div>
<div class="abs" style="left:1003px;top:684px;width:57px;height:27px;border-radius:7px;background:#f3f7fe;border:1px solid #d9e5fa"></div>
<div class="t" style="left:1012.75px;top:690.56px;font-size:14.1px;color:#2f6bdc;-webkit-text-stroke:0.3px #2f6bdc;transform:scaleX(0.9258);transform-origin:0 0;">2 days</div>
<div class="t" style="left:1321.00px;top:690.06px;font-size:15.4px;color:#0b0f19;letter-spacing:-0.377px;">₱3,400.00</div>
<div class="t" style="left:1443.60px;top:690.06px;font-size:15.4px;color:#0b0f19;letter-spacing:-0.540px;">₱0.00</div>
<div class="t" style="left:1587.10px;top:690.06px;font-size:15.4px;color:#e11d48;font-weight:700;letter-spacing:0.373px;">₱3,400.00</div>
<svg class="abs" style="left:1718.1px;top:684.5px" width="26.4" height="26.4" viewBox="0 0 24 24" fill="none" stroke="#3577e4" stroke-width="1.5" stroke-linecap="round" stroke-linejoin="round"><path d="M8.625 12a.375.375 0 1 1-.75 0 .375.375 0 0 1 .75 0Zm0 0H8.25m4.125 0a.375.375 0 1 1-.75 0 .375.375 0 0 1 .75 0Zm0 0H12m4.125 0a.375.375 0 1 1-.75 0 .375.375 0 0 1 .75 0Zm0 0h-.375M21 12a9 9 0 1 1-18 0 9 9 0 0 1 18 0Z"/></svg>
<div class="abs" style="left:404px;top:742px;width:1368px;height:1px;background:#e8eaee"></div>
<svg class="abs" style="left:426px;top:762px" width="110" height="50" viewBox="0 0 1897 862"><defs><filter id="b5" x="-5%" y="-5%" width="110%" height="110%"><feGaussianBlur stdDeviation="7"/></filter></defs><g filter="url(#b5)"><g ><defs><linearGradient id="gm" x1="0" y1="0" x2="0" y2="1"><stop offset="0" stop-color="#a51827"/><stop offset="0.5" stop-color="#8e101e"/><stop offset="1" stop-color="#560810"/></linearGradient></defs><path d="M190 690 L1230 690 L1100 760 L700 810 L260 780 Z" fill="#2a2a2a" opacity=".5"/><path d="M118 640 L118 440 Q130 370 165 350 L360 282 L560 122 Q760 92 960 95 L1200 140 L1290 300 L1330 340 L1322 520 L1290 640 L1180 660 L1000 640 L800 705 L620 722 L200 692 Z" fill="url(#gm)"/><path d="M382 275 L562 137 L960 116 L900 282Z" fill="#4b4e51" /><path d="M1002 142 L1080 146 L1110 290 L962 302Z" fill="#3b3d40" /><path d="M1100 150 L1185 155 L1272 270 L1130 288Z" fill="#4a4c50" /><ellipse cx="1055" cy="250" rx="58" ry="28" fill="#a81828"/><path d="M212 442 L562 442 L700 562 L762 622 L642 652 L202 642 L182 542Z" fill="#151516" /><rect x="205" y="378" width="430" height="26" fill="#1d1d1f"/><circle cx="395" cy="415" r="32" fill="#d9d9d9"/><rect x="292" y="570" width="195" height="36" fill="#dcdcdc"/><path d="M160 362 L212 372 L202 412 L160 402Z" fill="#e4e4e4" /><path d="M622 372 L832 346 L822 402 L642 412Z" fill="#e6e6e6" /><path d="M682 492 L802 482 L782 562 L742 552Z" fill="#1b1b1d" /><path d="M128 470 L165 475 L160 540 L132 530Z" fill="#1b1b1d" /><ellipse cx="925" cy="650" rx="105" ry="160" fill="#141416"/><ellipse cx="1258" cy="580" rx="68" ry="118" fill="#141416"/><ellipse cx="925" cy="662" rx="82" ry="140" fill="#1a1a1c"/><ellipse cx="920.08" cy="662" rx="59.04" ry="103.6" fill="#74767a"/><ellipse cx="920.08" cy="662" rx="18.04" ry="33.6" fill="#3f4144"/><ellipse cx="1255" cy="592" rx="50" ry="100" fill="#1a1a1c"/><ellipse cx="1252.0" cy="592" rx="36.0" ry="74.0" fill="#6d6f72"/><ellipse cx="1252.0" cy="592" rx="11.0" ry="24.0" fill="#3b3d40"/><ellipse cx="275" cy="740" rx="80" ry="45" fill="#151516"/></g></g></svg>
<div class="abs" style="left:587px;top:775px;width:54px;height:27px;border-radius:7px;background:#f3f7fe;border:1px solid #d9e5fa"></div>
<div class="t" style="left:597.35px;top:781.76px;font-size:14.1px;color:#2f6bdc;-webkit-text-stroke:0.3px #2f6bdc;transform:scaleX(0.9278);transform-origin:0 0;">AVAN</div>
<div class="t" style="left:702.90px;top:768.16px;font-size:15.4px;color:#7a7b80;letter-spacing:0.068px;">Pickup:</div>
<div class="t" style="left:702.90px;top:795.16px;font-size:15.4px;color:#7a7b80;letter-spacing:0.068px;">Return:</div>
<div class="t" style="left:765.10px;top:768.16px;font-size:15.4px;color:#0b0f19;letter-spacing:-0.129px;">Dec 01, 2025 02:00 PM</div>
<div class="t" style="left:765.10px;top:795.16px;font-size:15.4px;color:#0b0f19;letter-spacing:-0.129px;">Dec 31, 2025 02:00 PM</div>
<div class="abs" style="left:1003px;top:775px;width:65px;height:27px;border-radius:7px;background:#f3f7fe;border:1px solid #d9e5fa"></div>
<div class="t" style="left:1012.75px;top:781.56px;font-size:14.1px;color:#2f6bdc;-webkit-text-stroke:0.3px #2f6bdc;transform:scaleX(0.9409);transform-origin:0 0;">30 days</div>
<div class="t" style="left:1321.00px;top:781.06px;font-size:15.4px;color:#0b0f19;letter-spacing:-0.375px;">₱75,000.00</div>
<div class="t" style="left:1443.60px;top:781.06px;font-size:15.4px;color:#0b0f19;letter-spacing:-0.375px;">₱15,000.00</div>
<div class="t" style="left:1587.10px;top:781.06px;font-size:15.4px;color:#e11d48;font-weight:700;letter-spacing:0.392px;">₱60,000.00</div>
<svg class="abs" style="left:1718.1px;top:775.5px" width="26.4" height="26.4" viewBox="0 0 24 24" fill="none" stroke="#3577e4" stroke-width="1.5" stroke-linecap="round" stroke-linejoin="round"><path d="M8.625 12a.375.375 0 1 1-.75 0 .375.375 0 0 1 .75 0Zm0 0H8.25m4.125 0a.375.375 0 1 1-.75 0 .375.375 0 0 1 .75 0Zm0 0H12m4.125 0a.375.375 0 1 1-.75 0 .375.375 0 0 1 .75 0Zm0 0h-.375M21 12a9 9 0 1 1-18 0 9 9 0 0 1 18 0Z"/></svg>
<div class="abs" style="left:404px;top:833px;width:1368px;height:1px;background:#e8eaee"></div>
<svg class="abs" style="left:426px;top:850px" width="110" height="50" viewBox="0 0 1897 862"><defs><filter id="b6" x="-5%" y="-5%" width="110%" height="110%"><feGaussianBlur stdDeviation="7"/></filter></defs><g filter="url(#b6)"><g ><path d="M300 770 L1500 750 L1300 835 L500 845 Z" fill="#3a3a3c" opacity=".35"/><ellipse cx="275" cy="700" rx="145" ry="135" fill="#19191b"/><ellipse cx="285" cy="705" rx="62" ry="50" fill="#3a3b3f"/><path d="M235 690 Q270 760 340 720" stroke="#b9b9bd" stroke-width="14" fill="none"/><path d="M128 565 L150 385 Q170 345 205 338 L450 300 L620 182 Q900 160 1200 170 L1280 340 L1530 358 L1552 560 L1500 602 L1300 625 L950 625 L700 605 L130 625 Z" fill="#1f2126"/><path d="M472 292 L622 197 L905 197 L852 302Z" fill="#8e9498" /><path d="M680 280 L740 215 L840 215 L800 285Z" fill="#b8bcbf" /><path d="M952 197 L1072 197 L1092 332 L932 332Z" fill="#8a9095" /><path d="M1112 202 L1212 202 L1252 332 L1122 332Z" fill="#7f858a" /><path d="M380 600 L1360 600 L1360 690 L380 690Z" fill="#1c1d20" /><path d="M922 362 L1302 362 L1312 602 L942 602Z" fill="#3b414b" /><path d="M955 455 L1300 455 L1305 530 L958 530Z" fill="#1f2024" /><path d="M1330 380 L1525 385 L1540 540 L1340 540Z" fill="#2b2f36" /><rect x="945" y="292" width="100" height="62" rx="10" fill="#17181b"/><path d="M172 382 L622 382 L622 502 L162 502Z" fill="#2e3138" /><rect x="180" y="420" width="300" height="40" fill="#565a62"/><rect x="235" y="366" width="180" height="22" fill="#c89a2a"/><rect x="510" y="366" width="150" height="22" fill="#b98f3a"/><path d="M620 398 L668 398 L642 492 L620 492Z" fill="#f0e6dc" /><rect x="685" y="485" width="28" height="40" fill="#d79a2b"/><rect x="130" y="545" width="560" height="50" fill="#3e424a"/><rect x="228" y="575" width="135" height="28" fill="#8d9298"/><path d="M420 130 L415 292" stroke="#d8b48a" stroke-width="8" fill="none" opacity=".7"/><ellipse cx="790" cy="690" rx="150" ry="160" fill="#151517"/><ellipse cx="795" cy="695" rx="85" ry="100" fill="#2a2c31"/><ellipse cx="1420" cy="650" rx="88" ry="138" fill="#151517"/><ellipse cx="1428" cy="655" rx="45" ry="85" fill="#2a2c31"/></g></g></svg>
<div class="abs" style="left:587px;top:866px;width:47px;height:27px;border-radius:7px;background:#f3f7fe;border:1px solid #d9e5fa"></div>
<div class="t" style="left:596.52px;top:872.76px;font-size:14.1px;color:#2f6bdc;-webkit-text-stroke:0.3px #2f6bdc;transform:scaleX(0.8309);transform-origin:0 0;">PICK</div>
<div class="t" style="left:702.90px;top:859.16px;font-size:15.4px;color:#7a7b80;letter-spacing:0.068px;">Pickup:</div>
<div class="t" style="left:702.90px;top:886.16px;font-size:15.4px;color:#7a7b80;letter-spacing:0.068px;">Return:</div>
<div class="t" style="left:765.10px;top:859.16px;font-size:15.4px;color:#0b0f19;letter-spacing:-0.049px;">Dec 10, 2025 10:00 AM</div>
<div class="t" style="left:765.10px;top:886.16px;font-size:15.4px;color:#0b0f19;letter-spacing:-0.129px;">Dec 12, 2025 03:00 PM</div>
<div class="abs" style="left:1003px;top:866px;width:57px;height:27px;border-radius:7px;background:#f3f7fe;border:1px solid #d9e5fa"></div>
<div class="t" style="left:1012.75px;top:872.56px;font-size:14.1px;color:#2f6bdc;-webkit-text-stroke:0.3px #2f6bdc;transform:scaleX(0.9258);transform-origin:0 0;">2 days</div>
<div class="t" style="left:1136.00px;top:872.06px;font-size:15.4px;color:#0b0f19;">John Doe</div>
<div class="t" style="left:1321.00px;top:872.06px;font-size:15.4px;color:#0b0f19;letter-spacing:-0.377px;">₱4,100.00</div>
<div class="t" style="left:1443.60px;top:872.06px;font-size:15.4px;color:#0b0f19;letter-spacing:-0.377px;">₱1,500.00</div>
<div class="t" style="left:1587.10px;top:872.06px;font-size:15.4px;color:#e11d48;font-weight:700;letter-spacing:0.373px;">₱2,600.00</div>
<svg class="abs" style="left:1718.1px;top:866.5px" width="26.4" height="26.4" viewBox="0 0 24 24" fill="none" stroke="#3577e4" stroke-width="1.5" stroke-linecap="round" stroke-linejoin="round"><path d="M8.625 12a.375.375 0 1 1-.75 0 .375.375 0 0 1 .75 0Zm0 0H8.25m4.125 0a.375.375 0 1 1-.75 0 .375.375 0 0 1 .75 0Zm0 0H12m4.125 0a.375.375 0 1 1-.75 0 .375.375 0 0 1 .75 0Zm0 0h-.375M21 12a9 9 0 1 1-18 0 9 9 0 0 1 18 0Z"/></svg>
</body>
</html>
